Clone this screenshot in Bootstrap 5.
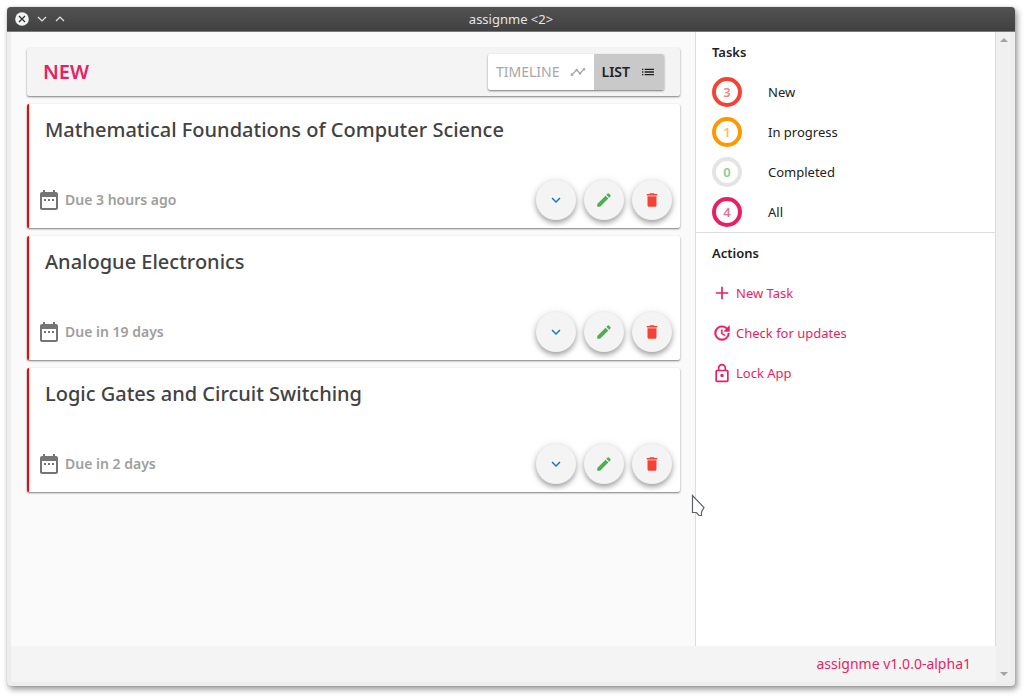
<!DOCTYPE html>
<html lang="en">
<head>
<meta charset="utf-8">
<meta name="viewport" content="width=device-width, initial-scale=1">
<title>assignme</title>
<link href="https://cdn.jsdelivr.net/npm/bootstrap@5.3.0/dist/css/bootstrap.min.css" rel="stylesheet">
<style>
  :root { --brand: #e91e63; }
  body { font-family: "Noto Sans", "Open Sans", sans-serif; font-size: 13px; line-height: 20px; color: #212121; background: #fff; }
  svg { display: block; fill: currentColor; flex: none; }
  .desktop { min-height: 100vh; padding: 7px 13px 13px 7px; }
  .app-window { background: #ededed; border-radius: 4px; box-shadow: 0 0 1px #999, 2px 3px 6px rgba(0,0,0,.45); }
  .title-bar { height: 25px; padding: 0 8px; background: linear-gradient(#525252, #414141); border-bottom: 1px solid #d9534a; border-radius: 4px 4px 0 0; color: #e4e4e4; }
  .title-side { width: 56px; flex: none; }
  .bare { border: 0; padding: 0; background: none; color: inherit; }
  .app-body { margin: 0 4px 4px; background: #fafafa; }
  .board { padding: 16px 15px 16px 16px; }
  .lift { box-shadow: 0 1px 2px rgba(0,0,0,.5); border-radius: 2px; }
  .board-head { height: 48px; padding: 0 16px; background: #f4f4f4; }
  .board-head h1 { font-size: 20px; font-weight: 600; line-height: 24px; color: var(--brand); }
  .view-switch { background: #fff; font-size: 14px; font-weight: 500; }
  .view-switch button { height: 36px; padding: 0 8px; gap: 10px; color: #a6a6a6; }
  .view-switch .on { background: #c9c9c9; color: #212121; border-radius: 0 2px 2px 0; font-weight: 600; }
  .task { height: 124px; background: #fff; border-left: 2px solid #f00; }
  .task h2 { font-size: 20px; font-weight: 500; line-height: 24px; color: #424242; padding: 14px 16px 0; }
  .task-foot { padding: 0 8px 8px; }
  .due { font-size: 14px; font-weight: 600; color: #9e9e9e; }
  .due svg { color: #757575; }
  .fab { width: 40px; height: 40px; border-radius: 50%; background: #f4f4f4; box-shadow: 0 3px 5px rgba(0,0,0,.3), 0 1px 10px rgba(0,0,0,.12); }
  .fab-more { color: #1976d2; }
  .fab-edit { color: #4caf50; }
  .fab-bin { color: #f44336; }
  .side-panel { width: 301px; flex: none; background: #fff; border-left: 1px solid #dcdcdc; border-right: 1px solid #dcdcdc; }
  .side-panel h3 { font-size: 13px; font-weight: 600; line-height: 40px; padding: 0 16px; }
  .side-row { height: 40px; padding: 0 16px; color: #212121; text-decoration: none; }
  .ring { width: 30px; height: 30px; border: 4px solid; border-radius: 50%; margin-right: 26px; font-weight: 600; }
  .ring span { opacity: .65; }
  .c-new { color: #f44336; }
  .c-prog { color: #ff9800; }
  .c-all { color: #e91e63; }
  .c-done { color: #4caf50; border-color: #e4e4e4; }
  .rule { border-top: 1px solid #dcdcdc; }
  .action { color: var(--brand); }
  .app-foot { height: 36px; padding: 0 25px; background: #f4f4f4; color: var(--brand); font-size: 14px; }
  .scroll { width: 15px; flex: none; background: #f0f0f0; color: #a3a3a3; padding: 6px 0; }
  .pointer { position: absolute; left: 691px; top: 494px; pointer-events: none; }
</style>
</head>
<body>
<svg class="d-none">
  <symbol id="i-cal" viewBox="0 0 24 24"><path d="M9 11H7v2h2v-2zm4 0h-2v2h2v-2zm4 0h-2v2h2v-2zm2-7h-1V2h-2v2H8V2H6v2H5c-1.110 0-1.990.9-1.990 2L3 20c0 1.100.890 2 2 2h14c1.100 0 2-.9 2-2V6c0-1.100-.9-2-2-2zm0 16H5V9h14v11z"/></symbol>
  <symbol id="i-down" viewBox="0 0 24 24"><path d="M7.410 8.590 12 13.170l4.590-4.580L18 10l-6 6-6-6z"/></symbol>
  <symbol id="i-edit" viewBox="0 0 24 24"><path d="M3 17.250V21h3.750L17.810 9.940l-3.750-3.750L3 17.250zM20.710 7.040c.39-.39.39-1.020 0-1.410l-2.340-2.340c-.39-.39-1.020-.39-1.410 0l-1.830 1.830 3.750 3.750 1.830-1.830z"/></symbol>
  <symbol id="i-bin" viewBox="0 0 24 24"><path d="M6 19c0 1.100.9 2 2 2h8c1.100 0 2-.9 2-2V7H6v12zM19 4h-3.500l-1-1h-5l-1 1H5v2h14V4z"/></symbol>
</svg>
<div class="desktop d-flex flex-column">
  <div class="app-window d-flex flex-column flex-grow-1">
    <header class="title-bar d-flex align-items-center">
      <div class="title-side d-flex align-items-center gap-2">
        <button class="bare" aria-label="Close"><svg width="14" height="14" viewBox="0 0 14 14"><circle cx="7" cy="7" r="6.800" fill="#f2f4f4"/><path d="M4 4l6 6M10 4l-6 6" stroke="#333" stroke-width="1.300"/></svg></button>
        <button class="bare" aria-label="Minimize"><svg width="10" height="10" viewBox="0 0 10 10"><path d="M1 3l4 4 4-4" fill="none" stroke="currentColor" stroke-width="1.200"/></svg></button>
        <button class="bare" aria-label="Maximize"><svg width="10" height="10" viewBox="0 0 10 10"><path d="M1 7l4-4 4 4" fill="none" stroke="currentColor" stroke-width="1.200"/></svg></button>
      </div>
      <div class="flex-grow-1 text-center">assignme &lt;2&gt;</div>
      <div class="title-side"></div>
    </header>
    <div class="app-body d-flex flex-grow-1">
      <div class="d-flex flex-column flex-grow-1">
        <div class="d-flex flex-grow-1">
          <main class="board d-flex flex-column gap-2 flex-grow-1">
            <div class="board-head lift d-flex align-items-center justify-content-between">
              <h1 class="m-0">NEW</h1>
              <div class="view-switch lift d-flex">
                <button class="bare d-flex align-items-center">TIMELINE <svg width="16" height="16" viewBox="0 0 24 24"><path d="M23 8c0 1.100-.9 2-2 2-.18 0-.35-.02-.51-.07l-3.560 3.550c.05.160.070.340.070.520 0 1.100-.9 2-2 2s-2-.9-2-2c0-.18.020-.36.070-.52l-2.550-2.550c-.16.050-.34.070-.52.070s-.36-.02-.52-.07l-4.550 4.560c.05.160.070.330.070.510 0 1.100-.9 2-2 2s-2-.9-2-2 .9-2 2-2c.18 0 .35.020.510.070l4.560-4.550C8.020 9.360 8 9.180 8 9c0-1.100.9-2 2-2s2 .9 2 2c0 .180-.02.360-.07.520l2.550 2.550c.16-.05.340-.07.520-.07s.360.020.520.070l3.550-3.560C19.020 8.350 19 8.180 19 8c0-1.100.9-2 2-2s2 .9 2 2z"/></svg></button>
                <button class="bare on d-flex align-items-center">LIST <svg width="16" height="16" viewBox="0 0 24 24"><path d="M3 13h2v-2H3v2zm0 4h2v-2H3v2zm0-8h2V7H3v2zm4 4h14v-2H7v2zm0 4h14v-2H7v2zM7 7v2h14V7H7z"/></svg></button>
              </div>
            </div>
            <article class="task lift d-flex flex-column justify-content-between">
              <h2 class="m-0">Mathematical Foundations of Computer Science</h2>
              <div class="task-foot d-flex align-items-center gap-2">
                <div class="due d-flex align-items-center gap-1 me-auto"><svg width="24" height="24"><use href="#i-cal"/></svg>Due 3 hours ago</div>
                <button class="bare fab fab-more d-flex align-items-center justify-content-center" aria-label="Expand"><svg width="18" height="18"><use href="#i-down"/></svg></button>
                <button class="bare fab fab-edit d-flex align-items-center justify-content-center" aria-label="Edit"><svg width="18" height="18"><use href="#i-edit"/></svg></button>
                <button class="bare fab fab-bin d-flex align-items-center justify-content-center" aria-label="Delete"><svg width="18" height="18"><use href="#i-bin"/></svg></button>
              </div>
            </article>
            <article class="task lift d-flex flex-column justify-content-between">
              <h2 class="m-0">Analogue Electronics</h2>
              <div class="task-foot d-flex align-items-center gap-2">
                <div class="due d-flex align-items-center gap-1 me-auto"><svg width="24" height="24"><use href="#i-cal"/></svg>Due in 19 days</div>
                <button class="bare fab fab-more d-flex align-items-center justify-content-center" aria-label="Expand"><svg width="18" height="18"><use href="#i-down"/></svg></button>
                <button class="bare fab fab-edit d-flex align-items-center justify-content-center" aria-label="Edit"><svg width="18" height="18"><use href="#i-edit"/></svg></button>
                <button class="bare fab fab-bin d-flex align-items-center justify-content-center" aria-label="Delete"><svg width="18" height="18"><use href="#i-bin"/></svg></button>
              </div>
            </article>
            <article class="task lift d-flex flex-column justify-content-between">
              <h2 class="m-0">Logic Gates and Circuit Switching</h2>
              <div class="task-foot d-flex align-items-center gap-2">
                <div class="due d-flex align-items-center gap-1 me-auto"><svg width="24" height="24"><use href="#i-cal"/></svg>Due in 2 days</div>
                <button class="bare fab fab-more d-flex align-items-center justify-content-center" aria-label="Expand"><svg width="18" height="18"><use href="#i-down"/></svg></button>
                <button class="bare fab fab-edit d-flex align-items-center justify-content-center" aria-label="Edit"><svg width="18" height="18"><use href="#i-edit"/></svg></button>
                <button class="bare fab fab-bin d-flex align-items-center justify-content-center" aria-label="Delete"><svg width="18" height="18"><use href="#i-bin"/></svg></button>
              </div>
            </article>
          </main>
          <aside class="side-panel">
            <h3 class="m-0">Tasks</h3>
            <a href="#" class="side-row d-flex align-items-center"><span class="ring c-new d-flex align-items-center justify-content-center"><span>3</span></span>New</a>
            <a href="#" class="side-row d-flex align-items-center"><span class="ring c-prog d-flex align-items-center justify-content-center"><span>1</span></span>In progress</a>
            <a href="#" class="side-row d-flex align-items-center"><span class="ring c-done d-flex align-items-center justify-content-center"><span>0</span></span>Completed</a>
            <a href="#" class="side-row d-flex align-items-center"><span class="ring c-all d-flex align-items-center justify-content-center"><span>4</span></span>All</a>
            <h3 class="m-0 rule">Actions</h3>
            <a href="#" class="side-row action d-flex align-items-center gap-1"><svg width="20" height="20" viewBox="0 0 24 24"><path d="M19.500 13H13v6.500h-2V13H4.500v-2H11V4.500h2V11h6.500z"/></svg>New Task</a>
            <a href="#" class="side-row action d-flex align-items-center gap-1"><svg width="20" height="20" viewBox="0 0 24 24"><path d="M21 10.120h-6.780l2.740-2.820c-2.730-2.700-7.150-2.800-9.880-.1-2.730 2.710-2.730 7.080 0 9.790 2.730 2.710 7.150 2.710 9.880 0C18.320 15.650 19 14.080 19 12.100h2c0 1.980-.88 4.550-2.640 6.290-3.510 3.480-9.210 3.480-12.720 0-3.500-3.470-3.530-9.110-.02-12.580 3.510-3.470 9.140-3.470 12.650 0L21 3v7.120zM12.500 8v4.250l3.500 2.080-.72 1.210L11 13V8h1.500z" stroke="currentColor" stroke-width=".5"/></svg>Check for updates</a>
            <a href="#" class="side-row action d-flex align-items-center gap-1"><svg width="20" height="20" viewBox="0 0 24 24"><path d="M12 17c-1.110 0-2-.9-2-2s.890-2 2-2 2 .9 2 2-.9 2-2 2m6 4V10H6v11h12m0-13c1.100 0 2 .9 2 2v11c0 1.100-.9 2-2 2H6c-1.110 0-2-.9-2-2V10c0-1.110.890-2 2-2h1V6c0-2.760 2.240-5 5-5s5 2.240 5 5v2h1m-6-5c-1.660 0-3 1.340-3 3v2h6V6c0-1.660-1.340-3-3-3z"/></svg>Lock App</a>
          </aside>
        </div>
        <footer class="app-foot d-flex align-items-center justify-content-end">assignme v1.0.0-alpha1</footer>
      </div>
      <div class="scroll d-flex flex-column justify-content-between align-items-center" aria-hidden="true">
        <svg width="8" height="4" viewBox="0 0 8 4"><path d="M0 4l4-4 4 4z"/></svg>
        <svg width="8" height="4" viewBox="0 0 8 4"><path d="M0 0h8L4 4z"/></svg>
      </div>
    </div>
  </div>
</div>
<svg class="pointer" width="14" height="24" viewBox="0 0 14 24"><path d="M1.500 1.500V18.500H5.500L8 21.500H10.500V18L13 13.500z" fill="#fff" stroke="#5c6366" stroke-width="1.200"/></svg>
<script src="https://cdn.jsdelivr.net/npm/bootstrap@5.3.0/dist/js/bootstrap.bundle.min.js"></script>
</body>
</html>
